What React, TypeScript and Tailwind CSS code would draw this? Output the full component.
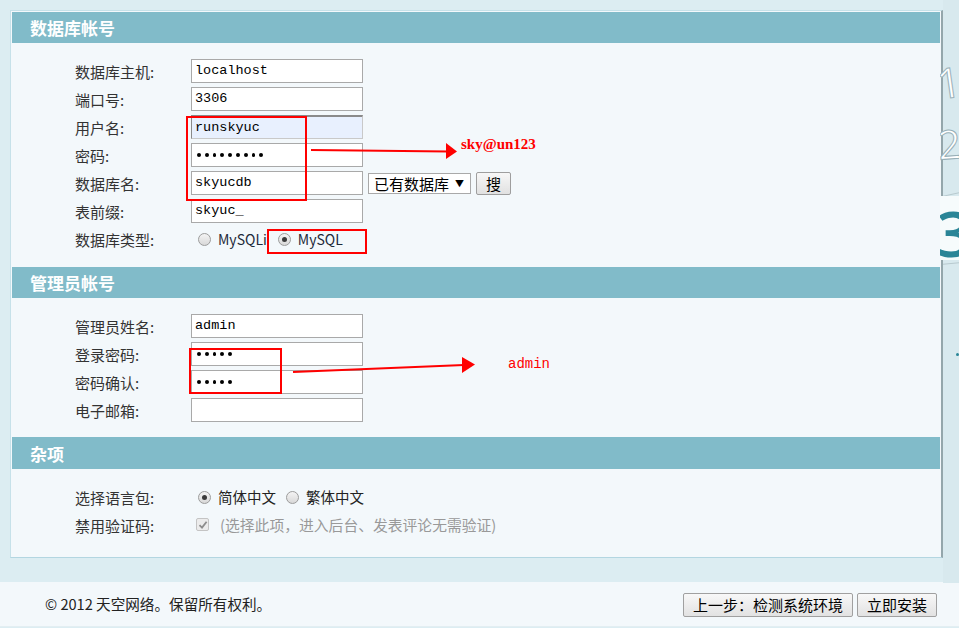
import React from "react";

const CJK = { fontFamily: '"Noto Sans CJK SC", "Noto Sans", sans-serif' };
const MONO = { fontFamily: '"Liberation Mono", "DejaVu Sans Mono", monospace' };
const OPEN = { fontFamily: '"Open Sans", sans-serif' };

function SectionHeader({ title, tall }: { title: string; tall?: boolean }) {
  return (
    <div
      className={`${tall ? "h-[32px]" : "h-[31px]"} bg-[#81bbc9] flex items-center px-[18px] text-white font-bold text-[17px] leading-none`}
      style={CJK}
    >
      {title}
    </div>
  );
}

function Label({ text }: { text: string }) {
  return (
    <div className="w-[116px] shrink-0 text-[15px] leading-none text-[#333]" style={CJK}>
      {text}
    </div>
  );
}

function Field({ value, autofill }: { value: string; autofill?: boolean }) {
  return (
    <div
      className={`w-[172px] h-[24px] flex items-center px-[3px] text-[13.5px] text-black leading-none border ${
        autofill
          ? "bg-[#e8f0fe] border-[#c9c9c9] border-t-[#8a8a8a] border-l-[#8a8a8a] border-t-2"
          : "bg-white border-[#a9a9a9]"
      }`}
      style={MONO}
    >
      {value}
    </div>
  );
}

function Dots({ n }: { n: number }) {
  return (
    <div className="w-[172px] h-[24px] flex items-center pl-[5px] gap-[4px] bg-white border border-[#a9a9a9]">
      {Array.from({ length: n }).map((_, i) => (
        <span key={i} className="w-[3.8px] h-[3.8px] rounded-full bg-black" />
      ))}
    </div>
  );
}

function Radio({ checked }: { checked?: boolean }) {
  return (
    <span className="w-[13px] h-[13px] rounded-full border border-[#9c9c9c] bg-gradient-to-b from-[#f4f4f4] to-[#d8d8d8] flex items-center justify-center shrink-0">
      {checked && <span className="w-[5px] h-[5px] rounded-full bg-[#3a3a3a]" />}
    </span>
  );
}

function Row({ label, children }: { label: string; children: React.ReactNode }) {
  return (
    <div className="h-[24px] flex items-center">
      <Label text={label} />
      {children}
    </div>
  );
}

export default function App() {
  return (
    <div className="relative w-[959px] h-[628px] bg-[#dcedf2] overflow-hidden" style={CJK}>
      {/* main panel */}
      <div className="ml-[10px] pt-[10px]">
        <div className="w-[933px] border border-[#c6e1e9] border-r-2 border-r-[#94a6ab] border-b-[#b3d6e1] bg-[#f3f8fb] p-px">
          <SectionHeader title="数据库帐号" />
          <div className="pt-[16px] pb-[16px] pl-[63px] flex flex-col gap-[4px]">
            <Row label="数据库主机:">
              <Field value="localhost" />
            </Row>
            <Row label="端口号:">
              <Field value="3306" />
            </Row>
            <Row label="用户名:">
              <Field value="runskyuc" autofill />
            </Row>
            <Row label="密码:">
              <Dots n={9} />
            </Row>
            <Row label="数据库名:">
              <Field value="skyucdb" />
              <div className="ml-[5px] w-[103px] h-[21px] border border-[#a9a9a9] bg-white flex items-center pl-[5px] text-[15px] leading-none text-black">
                已有数据库 <span className="ml-[6px] text-[9px]">▼</span>
              </div>
              <div className="ml-[5px] w-[35px] h-[23px] border border-[#9e9e9e] rounded-[2px] bg-gradient-to-b from-[#f7f7f7] to-[#e1e1e1] flex items-center justify-center text-[15px] leading-none text-black">
                搜
              </div>
            </Row>
            <Row label="表前缀:">
              <Field value="skyuc_" />
            </Row>
            <Row label="数据库类型:">
              <div className="flex items-center pl-[7px] text-[14px] leading-none text-[#1e2a3a]">
                <Radio />
                <span className="ml-[7px]">MySQLi</span>
                <span className="ml-[11px]">
                  <Radio checked />
                </span>
                <span className="ml-[7px]">MySQL</span>
              </div>
            </Row>
          </div>

          <SectionHeader title="管理员帐号" />
          <div className="pt-[16px] pb-[15px] pl-[63px] flex flex-col gap-[4px]">
            <Row label="管理员姓名:">
              <Field value="admin" />
            </Row>
            <Row label="登录密码:">
              <Dots n={5} />
            </Row>
            <Row label="密码确认:">
              <Dots n={5} />
            </Row>
            <Row label="电子邮箱:">
              <Field value="" />
            </Row>
          </div>

          <SectionHeader title="杂项" tall />
          <div className="pt-[16px] pb-[19px] pl-[63px] flex flex-col gap-[4px]">
            <Row label="选择语言包:">
              <div className="flex items-center pl-[7px] text-[14.5px] leading-none text-[#222]">
                <Radio checked />
                <span className="ml-[7px]">简体中文</span>
                <span className="ml-[10px]">
                  <Radio />
                </span>
                <span className="ml-[7px]">繁体中文</span>
              </div>
            </Row>
            <Row label="禁用验证码:">
              <div className="flex items-center pl-[5px] text-[14.8px] leading-none text-[#999]">
                <span className="w-[13px] h-[13px] border border-[#c4c4c4] rounded-[2px] bg-[#ececec] flex items-center justify-center">
                  <svg width="10" height="10" viewBox="0 0 10 10">
                    <path d="M1.5 5.2 L4 7.6 L8.6 1.8" fill="none" stroke="#8d8d8d" strokeWidth="1.8" />
                  </svg>
                </span>
                <span className="ml-[11px]">(选择此项，进入后台、发表评论无需验证)</span>
              </div>
            </Row>
          </div>
        </div>
      </div>

      {/* footer */}
      <div className="mt-[24px] h-[45px] bg-[#f3f8fb] border-b border-[#e3eef2] flex items-center pl-[45px] pr-[22px]">
        <div className="flex-1 text-[14.6px] leading-none text-[#222]">© 2012 天空网络。保留所有权利。</div>
        <div className="flex gap-[4px] mt-[1px]">
          <div className="w-[170px] h-[24px] border border-[#a0a0a0] rounded-[2px] bg-gradient-to-b from-[#f8f8f8] to-[#e2e2e2] flex items-center justify-center text-[15px] leading-none text-black">
            上一步：检测系统环境
          </div>
          <div className="w-[80px] h-[24px] border border-[#a0a0a0] rounded-[2px] bg-gradient-to-b from-[#f8f8f8] to-[#e2e2e2] flex items-center justify-center text-[15px] leading-none text-black">
            立即安装
          </div>
        </div>
      </div>

      {/* right side step tabs (partly visible sidebar) */}
      <div className="absolute left-[940px] top-0 w-[19px] h-[583px] overflow-hidden">
        <div className="absolute left-[3px] top-0 w-[16px] h-full bg-[#d8e9ee]" />
        <div className="absolute left-[3px] top-[185px] w-[16px] h-[10px] border-b border-[#b7c9ce] -skew-y-12" />
        <div className="absolute left-0 top-[196px] w-[19px] h-[64px] bg-[#f6fbfc]" />
        <div className="absolute left-[3px] top-[258px] w-[16px] h-[6px] border-b border-[#b7c9ce] -skew-y-6" />
        <div
          className="absolute left-[-3px] top-[61px] text-[42px] font-normal text-white leading-none -rotate-[8deg] [-webkit-text-stroke:1px_#98b0b8]"
          style={OPEN}
        >
          1
        </div>
        <div
          className="absolute left-[-2px] top-[124px] text-[40px] font-normal text-white leading-none -rotate-[4deg] [-webkit-text-stroke:1px_#98b0b8]"
          style={OPEN}
        >
          2
        </div>
        <div className="absolute left-[-4px] top-[201px] text-[64px] font-semibold text-[#2a8597] leading-none" style={OPEN}>
          3
        </div>
        <div className="absolute left-[16px] top-[353px] w-[3px] h-[3px] rounded-full bg-[#2a8597]" />
      </div>

      {/* red annotations */}
      <div className="absolute left-[186px] top-[116px] w-[121px] h-[85px] border-2 border-[#f00]" />
      <div className="absolute left-[267px] top-[229px] w-[100px] h-[25px] border-2 border-[#f00]" />
      <div className="absolute left-[189px] top-[348px] w-[93px] h-[46px] border-2 border-[#f00]" />
      <svg className="absolute left-0 top-0 pointer-events-none" width="959" height="628">
        <line x1="311" y1="150" x2="448" y2="151.5" stroke="#f00" strokeWidth="2" />
        <polygon points="446,143 457,151.5 446,159" fill="#f00" />
        <line x1="293" y1="372" x2="464" y2="365" stroke="#f00" strokeWidth="2" />
        <polygon points="462,357 475,364.5 462,373" fill="#f00" />
      </svg>
      <div className="absolute left-[461px] top-[137px] text-[15px] font-bold leading-none text-[#f00]" style={{ fontFamily: '"Liberation Serif", serif' }}>
        sky@un123
      </div>
      <div className="absolute left-[508px] top-[357px] text-[14px] leading-none text-[#f00]" style={MONO}>
        admin
      </div>
    </div>
  );
}
